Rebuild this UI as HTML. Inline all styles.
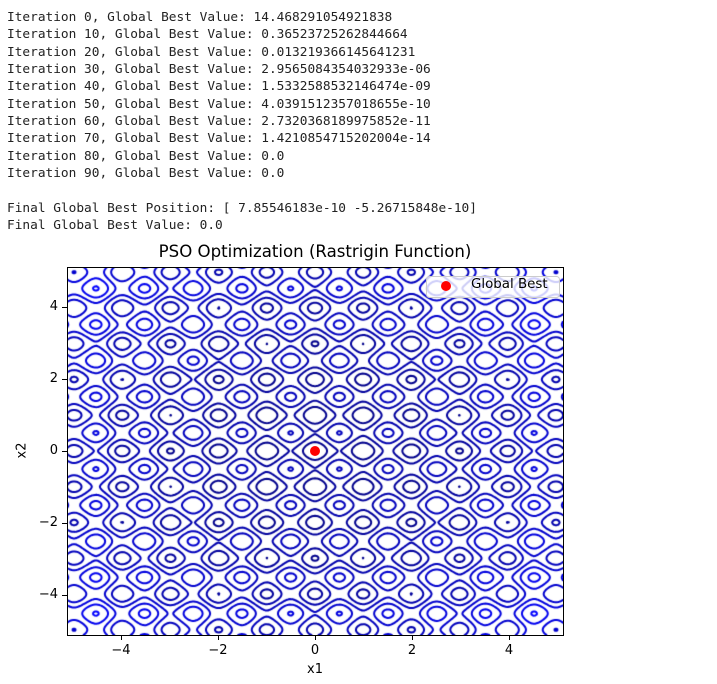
<!DOCTYPE html>
<html><head><meta charset="utf-8"><style>
body{margin:0;background:#fff;width:717px;height:684px;position:relative;overflow:hidden;font-family:"DejaVu Sans","Liberation Sans",sans-serif}
pre{position:absolute;left:7px;top:9px;margin:0;font-family:"DejaVu Sans Mono","Liberation Mono",monospace;font-size:12.8px;line-height:17.33px;color:#222}
.t{position:absolute;font-size:13px;color:#000;white-space:nowrap}
</style></head><body>
<pre>Iteration 0, Global Best Value: 14.468291054921838
Iteration 10, Global Best Value: 0.36523725262844664
Iteration 20, Global Best Value: 0.013219366145641231
Iteration 30, Global Best Value: 2.9565084354032933e-06
Iteration 40, Global Best Value: 1.5332588532146474e-09
Iteration 50, Global Best Value: 4.0391512357018655e-10
Iteration 60, Global Best Value: 2.7320368189975852e-11
Iteration 70, Global Best Value: 1.4210854715202004e-14
Iteration 80, Global Best Value: 0.0
Iteration 90, Global Best Value: 0.0

Final Global Best Position: [ 7.85546183e-10 -5.26715848e-10]
Final Global Best Value: 0.0</pre>
<div class="t" style="left:0;width:630px;text-align:center;top:242px;font-size:16.6px">PSO Optimization (Rastrigin Function)</div>
<canvas id="c" width="496" height="368" style="position:absolute;left:67px;top:267px"></canvas>
<svg width="717" height="684" style="position:absolute;left:0;top:0">
<rect x="67.5" y="267.5" width="496" height="368" fill="none" stroke="#000" stroke-width="1"/>
<g stroke="#000" stroke-width="1">
<line x1="121.5" y1="636" x2="121.5" y2="640"/><line x1="218.5" y1="636" x2="218.5" y2="640"/><line x1="315.5" y1="636" x2="315.5" y2="640"/><line x1="412.5" y1="636" x2="412.5" y2="640"/><line x1="509.5" y1="636" x2="509.5" y2="640"/>
<line x1="62" y1="307.5" x2="67" y2="307.5"/><line x1="62" y1="379.5" x2="67" y2="379.5"/><line x1="62" y1="451.5" x2="67" y2="451.5"/><line x1="62" y1="523.5" x2="67" y2="523.5"/><line x1="62" y1="595.5" x2="67" y2="595.5"/>
</g>
<circle cx="315" cy="451" r="5" fill="#ff0000"/>
<rect x="426.5" y="276.5" width="133" height="21" rx="3" fill="rgba(255,255,255,0.8)" stroke="#ccc"/>
<circle cx="446" cy="286" r="5" fill="#ff0000"/>
</svg>
<div class="t" style="left:471px;top:277px;font-size:13.4px">Global Best</div>
<div class="t" style="left:101px;width:40px;text-align:center;top:643px">−4</div>
<div class="t" style="left:198px;width:40px;text-align:center;top:643px">−2</div>
<div class="t" style="left:295px;width:40px;text-align:center;top:643px">0</div>
<div class="t" style="left:392px;width:40px;text-align:center;top:643px">2</div>
<div class="t" style="left:489px;width:40px;text-align:center;top:643px">4</div>
<div class="t" style="left:0;width:58px;text-align:right;top:299px">4</div>
<div class="t" style="left:0;width:58px;text-align:right;top:371px">2</div>
<div class="t" style="left:0;width:58px;text-align:right;top:443px">0</div>
<div class="t" style="left:0;width:58px;text-align:right;top:515px">−2</div>
<div class="t" style="left:0;width:58px;text-align:right;top:587px">−4</div>
<div class="t" style="left:295px;width:40px;text-align:center;top:662px">x1</div>
<div class="t" style="left:14px;top:443px;transform:rotate(-90deg);transform-origin:center">x2</div>
<script>
var c=document.getElementById('c'),g=c.getContext('2d');
var W=496,H=368,N=320,M=320,x0=-5.12,x1=5.12,y0=-5.12,y1=5.12;
function f(x,y){return 20+x*x-10*Math.cos(2*Math.PI*x)+y*y-10*Math.cos(2*Math.PI*y);}
var Z=[];for(var j=0;j<=M;j++){var r=[];var y=y1-(y1-y0)*j/M;for(var i=0;i<=N;i++){r.push(f(x0+(x1-x0)*i/N,y));}Z.push(r);}
var sx=W/N,sy=H/M;
g.lineWidth=2;g.lineCap='round';g.lineJoin='round';
for(var L=10;L<=80;L+=10){
 var t=(L-10)/70;
 var col='rgb(0,0,'+Math.round(140+115*t)+')';
 g.strokeStyle=col;g.beginPath();
 for(var j=0;j<M;j++)for(var i=0;i<N;i++){
  var a=Z[j][i],b=Z[j][i+1],cc=Z[j+1][i+1],d=Z[j+1][i];
  var pts=[];
  function e(v1,v2,xa,ya,xb,yb){if((v1<L)!=(v2<L)){var k=(L-v1)/(v2-v1);pts.push([(xa+(xb-xa)*k)*sx,(ya+(yb-ya)*k)*sy]);}}
  e(a,b,i,j,i+1,j);e(b,cc,i+1,j,i+1,j+1);e(d,cc,i,j+1,i+1,j+1);e(a,d,i,j,i,j+1);
  if(pts.length>=2){g.moveTo(pts[0][0],pts[0][1]);g.lineTo(pts[1][0],pts[1][1]);}
  if(pts.length==4){g.moveTo(pts[2][0],pts[2][1]);g.lineTo(pts[3][0],pts[3][1]);}
 }
 g.stroke();
}
</script>
</body></html>
